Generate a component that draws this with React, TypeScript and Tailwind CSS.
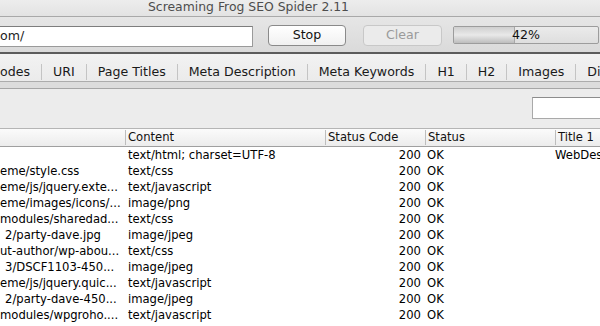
const rows = [
  { uri: "", content: "text/html; charset=UTF-8", title: "WebDes" },
  { uri: "eme/style.css", content: "text/css" },
  { uri: "eme/js/jquery.exte...", content: "text/javascript" },
  { uri: "eme/images/icons/...", content: "image/png" },
  { uri: "modules/sharedad...", content: "text/css" },
  { uri: "2/party-dave.jpg", content: "image/jpeg", indent: true },
  { uri: "ut-author/wp-abou...", content: "text/css" },
  { uri: "3/DSCF1103-450...", content: "image/jpeg", indent: true },
  { uri: "eme/js/jquery.quic...", content: "text/javascript" },
  { uri: "2/party-dave-450...", content: "image/jpeg", indent: true },
  { uri: "modules/wpgroho....", content: "text/javascript" },
  { uri: "ads/ad-unit.js", content: "text/javascript" },
];

const tabs = ["odes", "URI", "Page Titles", "Meta Description", "Meta Keywords", "H1", "H2", "Images", "Di"];

export default function App() {
  return (
    <main
      className="w-[600px] h-[326px] overflow-hidden flex flex-col bg-white text-black"
      style={{ fontFamily: '"DejaVu Sans", Verdana, sans-serif' }}
    >
      {/* title bar */}
      <div className="h-[17px] shrink-0 border-b border-[#a9a9a9] bg-gradient-to-b from-[#ededed] to-[#e3e3e3] pl-[148px] text-[12.4px] leading-[14px] text-[#4d4d4d]">
        Screaming Frog SEO Spider 2.11
      </div>

      {/* toolbar */}
      <div className="h-[37px] shrink-0 flex items-start pt-[9px] bg-gradient-to-b from-[#e6e6e6] to-[#dadada] border-b-2 border-[#5c5c5c] text-[12.6px]">
        <div className="w-[253px] h-[21px] bg-white border border-[#9a9a9a] border-l-0 border-t-[#7d7d7d] flex items-center text-[#222] leading-none">
          om/
        </div>
        <button className="ml-[15px] -mt-[1px] w-[78px] h-[21px] rounded-[4px] border border-[#8a8a8a] bg-gradient-to-b from-white to-[#f1f1f1] text-[#111] leading-none">
          Stop
        </button>
        <button className="ml-[17px] -mt-[1px] w-[79px] h-[21px] rounded-[4px] border border-[#c8c8c8] bg-[#ebebeb] text-[#9a9a9a] leading-none">
          Clear
        </button>
        <div className="ml-[11px] w-[146px] h-[18px] rounded-[2px] border border-[#9c9c9c] bg-gradient-to-b from-[#ebebeb] to-[#dedede] flex relative overflow-hidden">
          <div className="w-[61px] h-full bg-gradient-to-b from-[#cfcfcf] via-[#e9e9e9] to-[#bdbdbd] border-r border-[#a8a8a8]" />
          <span className="absolute inset-0 flex items-center justify-center text-[12.6px] text-[#111] leading-none">
            42%
          </span>
        </div>
      </div>

      {/* tabs */}
      <div className="h-[28px] shrink-0 flex items-center pt-[9px] bg-gradient-to-b from-[#f2f2f2] to-[#ebebeb] border-b border-[#acacac] text-[12.6px] text-[#1a1a1a] whitespace-nowrap">
        {tabs.map((t, i) => (
          <div key={t} className="flex items-center">
            {i > 0 && <span className="w-px h-[16px] bg-[#c4c4c4] mx-[11px]" />}
            <span>{t}</span>
          </div>
        ))}
      </div>
      <div className="h-[7px] shrink-0 bg-[#dcdcdc] border-b border-[#a6a6a6]" />

      {/* filter panel */}
      <div className="h-[40px] shrink-0 bg-[#ececec] flex items-start justify-end pt-[8px] border-b border-[#b5b5b5]">
        <div className="w-[68px] h-[22px] bg-white border border-[#a9a9a9] border-t-[#8c8c8c] border-r-0" />
      </div>

      {/* table header */}
      <div className="h-[18px] shrink-0 flex bg-gradient-to-b from-[#fbfbfb] to-[#ececec] border-b border-[#9f9f9f] text-[11.6px] text-[#111] whitespace-nowrap">
        <div className="w-[125px] shrink-0" />
        <div className="w-[200px] shrink-0 border-l border-[#bdbdbd] pl-[2px] my-[1px] leading-[15px]">Content</div>
        <div className="w-[100px] shrink-0 border-l border-[#bdbdbd] pl-[2px] my-[1px] leading-[15px]">Status Code</div>
        <div className="w-[130px] shrink-0 border-l border-[#bdbdbd] pl-[2px] my-[1px] leading-[15px]">Status</div>
        <div className="flex-1 border-l border-[#bdbdbd] pl-[2px] my-[1px] leading-[15px]">Title 1</div>
      </div>

      {/* rows */}
      <div className="flex flex-col text-[11.6px] leading-[16px] whitespace-nowrap">
        {rows.map((r, i) => (
          <div key={i} className="h-[16px] flex">
            <div className={`w-[125px] shrink-0 overflow-hidden ${r.indent ? "pl-[5px]" : ""}`}>{r.uri}</div>
            <div className="w-[200px] shrink-0 pl-[3px]">{r.content}</div>
            <div className="w-[100px] shrink-0 text-right pr-[4px]">200</div>
            <div className="w-[130px] shrink-0 pl-[2px]">OK</div>
            <div className="flex-1 overflow-hidden">{r.title ?? ""}</div>
          </div>
        ))}
      </div>
    </main>
  );
}
